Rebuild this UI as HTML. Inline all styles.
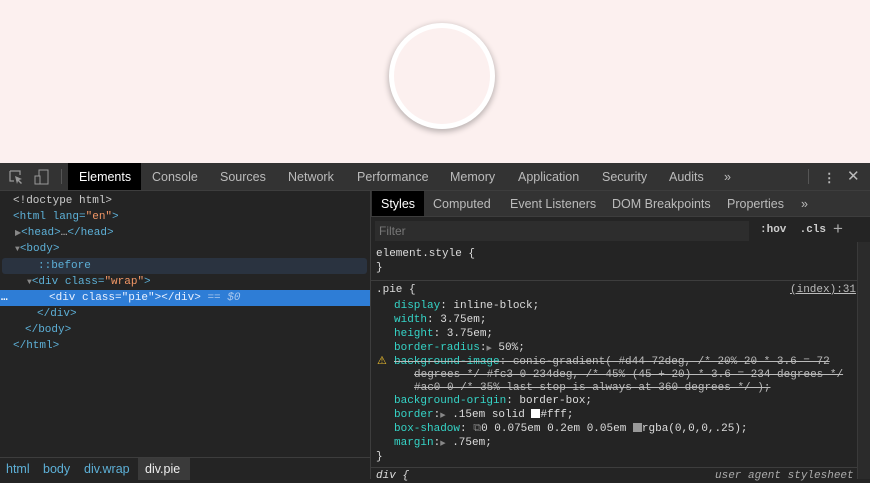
<!DOCTYPE html><html><head><style>
body{margin:0;width:870px;height:479px;overflow:hidden;background:#242424;font-family:"Liberation Sans",sans-serif;position:relative}
.top{position:absolute;left:0;top:0;width:870px;height:163px;background:#fcf0ef}
.pie{position:absolute;left:389px;top:23px;width:96px;height:96px;border-radius:50%;background:#fcf0ef;border:5px solid #fff;box-shadow:0 2px 6px 1px rgba(0,0,0,.25)}
.tb{position:absolute;top:163px;left:0;width:870px;height:27px;background:#333;border-bottom:1px solid #3d3d3d;font-size:12.5px;color:#bbb}
.tb span{position:absolute;top:7px}
.sel{background:#000;color:#fff}
.mono{font-family:"Liberation Mono",monospace;font-size:11px}
.left{position:absolute;left:0;top:191px;width:370px;height:266px;background:#242424}
.ln{position:absolute;height:16px;line-height:16px;white-space:pre;color:#5db0d7}
.g{color:#ccc}.o{color:#f29766}.dim{color:#888}
.right{position:absolute;left:370px;top:191px;width:500px;height:288px;border-left:1px solid #3d3d3d;background:#242424}
.st{position:absolute;height:14px;line-height:14px;white-space:pre;color:#ddd}
.p{color:#35d4c7}
.s{text-decoration:line-through;color:#bbb}
</style></head><body>
<div class="top"><div class="pie"></div></div>
<div class="tb">
<svg style="position:absolute;left:9px;top:7px" width="14" height="14" viewBox="0 0 14 14"><path d="M1 1h10v4M1 1v10h4" stroke="#999" fill="none" stroke-width="1.2"/><path d="M6 6l7 3-3 1 3 3-1 1-3-3-1 3z" fill="#999"/></svg>
<svg style="position:absolute;left:34px;top:6px" width="15" height="16" viewBox="0 0 15 16"><rect x="5" y="1" width="9" height="14" stroke="#999" fill="none"/><rect x="1" y="7" width="5" height="8" stroke="#999" fill="#333"/></svg>
<div style="position:absolute;left:61px;top:6px;width:1px;height:15px;background:#555"></div>
<div class="sel" style="position:absolute;left:68px;top:0;width:73px;height:27px"></div>
<span style="left:79px;color:#fff">Elements</span><span style="left:152px">Console</span><span style="left:220px">Sources</span><span style="left:288px">Network</span><span style="left:357px">Performance</span><span style="left:450px">Memory</span><span style="left:518px">Application</span><span style="left:602px">Security</span><span style="left:669px">Audits</span><span style="left:724px">»</span>
<div style="position:absolute;left:808px;top:6px;width:1px;height:15px;background:#555"></div>
<span style="left:823px;font-weight:bold">⋮</span><span style="left:847px;font-size:15px;top:4px">✕</span>
</div>
<div class="left mono">
<div class="ln g" style="left:13px;top:2px">&lt;!doctype html&gt;</div>
<div class="ln" style="left:13px;top:18px">&lt;html lang=<span class="o">"en"</span>&gt;</div>
<div class="ln" style="left:15px;top:34px"><span class="dim" style="font-size:8px">▶</span>&lt;head&gt;<span class="g">…</span>&lt;/head&gt;</div>
<div class="ln" style="left:15px;top:50px"><span class="dim" style="font-size:8px">▼</span>&lt;body&gt;</div>
<div style="position:absolute;left:2px;top:67px;width:365px;height:16px;background:#2a3340;border-radius:3px"></div>
<div class="ln" style="left:38px;top:67px">::before</div>
<div class="ln" style="left:27px;top:83px"><span class="dim" style="font-size:8px">▼</span>&lt;div class=<span class="o">"wrap"</span>&gt;</div>
<div style="position:absolute;left:0;top:99px;width:370px;height:16px;background:#2e7dd6"></div>
<div class="ln" style="left:1px;top:99px;color:#fff;font-weight:bold">…</div>
<div class="ln" style="left:49px;top:99px;color:#e8f0ff">&lt;div class="pie"&gt;&lt;/div&gt; <span style="color:#aac8ee">== <i>$0</i></span></div>
<div class="ln" style="left:37px;top:115px">&lt;/div&gt;</div>
<div class="ln" style="left:25px;top:131px">&lt;/body&gt;</div>
<div class="ln" style="left:13px;top:147px">&lt;/html&gt;</div>
</div>
<div style="position:absolute;left:0;top:457px;width:370px;height:22px;background:#242424;border-top:1px solid #3d3d3d;font-size:12.5px;color:#5db0d7">
<span style="position:absolute;left:6px;top:4px">html</span><span style="position:absolute;left:43px;top:4px">body</span><span style="position:absolute;left:84px;top:4px">div.wrap</span>
<div style="position:absolute;left:138px;top:0;width:52px;height:22px;background:#3a3a3a"></div><span style="position:absolute;left:145px;top:4px;color:#eee">div.pie</span></div>
<div class="right">
<div style="position:absolute;left:0;top:0;width:500px;height:25px;background:#333;border-bottom:1px solid #3d3d3d;font-size:12.5px;color:#bbb">
<div style="position:absolute;left:1px;top:0;width:52px;height:25px;background:#000"></div>
<span style="position:absolute;left:10px;top:6px;color:#fff">Styles</span><span style="position:absolute;left:62px;top:6px">Computed</span><span style="position:absolute;left:139px;top:6px">Event Listeners</span><span style="position:absolute;left:241px;top:6px">DOM Breakpoints</span><span style="position:absolute;left:356px;top:6px">Properties</span><span style="position:absolute;left:430px;top:6px">»</span></div>
<div style="position:absolute;left:4px;top:30px;width:374px;height:20px;background:#2d2d2d;font-size:12px;color:#777"><span style="position:absolute;left:4px;top:3px">Filter</span></div>
<div class="mono" style="position:absolute;left:389px;top:33px;color:#ccc;font-weight:bold">:hov&nbsp;&nbsp;.cls</div>
<div style="position:absolute;left:462px;top:28px;color:#aaa;font-size:17px">+</div>
<div style="position:absolute;left:486px;top:51px;width:14px;height:237px;background:#2b2b2b;border-left:1px solid #3a3a3a"></div>
<div class="mono">
<div class="st dim" style="left:5px;top:56px">element.style <span style="color:#ddd">{</span></div>
<div class="st" style="left:5px;top:70px">}</div>
<div style="position:absolute;left:0;top:89px;width:486px;height:1px;background:#3d3d3d"></div>
<div class="st" style="left:5px;top:92px">.pie {</div>
<div class="st dim" style="left:419px;top:92px;text-decoration:underline;color:#bbb">(index):31</div>
<div class="st" style="left:23px;top:108px"><span class="p">display</span>: inline-block;</div>
<div class="st" style="left:23px;top:122px"><span class="p">width</span>: 3.75em;</div>
<div class="st" style="left:23px;top:136px"><span class="p">height</span>: 3.75em;</div>
<div class="st" style="left:23px;top:150px"><span class="p">border-radius</span>:<span class="dim" style="font-size:7px">▶</span> 50%;</div>
<div class="st" style="left:6px;top:164px;color:#f2c12e">⚠</div>
<div class="st s" style="left:23px;top:164px"><span class="p">background-image</span>: conic-gradient( #d44 72deg, /* 20% 20 * 3.6 = 72</div>
<div class="st s" style="left:43px;top:177px">degrees */ #fc3 0 234deg, /* 45% (45 + 20) * 3.6 = 234 degrees */</div>
<div class="st s" style="left:43px;top:190px">#ac0 0 /* 35% last stop is always at 360 degrees */ );</div>
<div class="st" style="left:23px;top:203px"><span class="p">background-origin</span>: border-box;</div>
<div class="st" style="left:23px;top:217px"><span class="p">border</span>:<span class="dim" style="font-size:7px">▶</span> .15em solid <span style="display:inline-block;width:9px;height:9px;background:#fff;vertical-align:-1px"></span>#fff;</div>
<div class="st" style="left:23px;top:231px"><span class="p">box-shadow</span>: <span class="dim">⧉</span>0 0.075em 0.2em 0.05em <span style="display:inline-block;width:9px;height:9px;background:#999;vertical-align:-1px"></span>rgba(0,0,0,.25);</div>
<div class="st" style="left:23px;top:245px"><span class="p">margin</span>:<span class="dim" style="font-size:7px">▶</span> .75em;</div>
<div class="st" style="left:5px;top:259px">}</div>
<div style="position:absolute;left:0;top:276px;width:486px;height:1px;background:#3d3d3d"></div>
<div class="st" style="left:5px;top:278px;font-style:italic">div {</div>
<div class="st dim" style="left:344px;top:278px;font-style:italic;color:#aaa">user agent stylesheet</div>
</div></div>
</body></html>
